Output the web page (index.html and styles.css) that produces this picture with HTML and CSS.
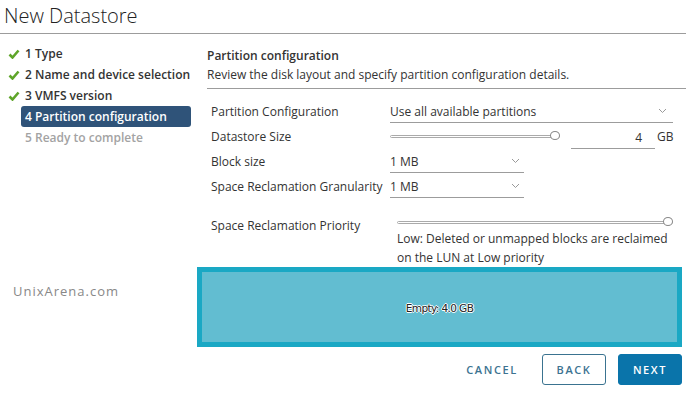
FILE: index.html
```html
<!DOCTYPE html>
<html lang="en">

<head>
    <meta charset="UTF-8">
    <meta name="viewport" content="width=device-width, initial-scale=1.0">
    <title>New Datastore</title>

    <link rel="stylesheet" href="styles.css">
</head>

<body>
    <h1 class="titulo">New Datastore</h1>

    <div class="wizard">
        <!-- pasos del asistente -->
        <ul class="pasos">
            <li class="hecho"><span class="check"></span>1 Type</li>
            <li class="hecho"><span class="check"></span>2 Name and device selection</li>
            <li class="hecho"><span class="check"></span>3 VMFS version</li>
            <li class="activo">4 Partition configuration</li>
            <li class="pendiente">5 Ready to complete</li>
        </ul>

        <div class="contenido">
            <div class="cabecera">
                <h2>Partition configuration</h2>
                <p>Review the disk layout and specify partition configuration details.</p>
            </div>

            <div class="form">
                <div class="fila">
                    <label>Partition Configuration</label>
                    <div class="select ancho">Use all available partitions<span class="flecha"></span></div>
                </div>
                <div class="fila">
                    <label>Datastore Size</label>
                    <div class="tamano">
                        <div class="slider corto"><span class="pomo"></span></div>
                        <div class="numero">4</div>
                        <span class="unidad">GB</span>
                    </div>
                </div>
                <div class="fila">
                    <label>Block size</label>
                    <div class="select">1 MB<span class="flecha"></span></div>
                </div>
                <div class="fila">
                    <label>Space Reclamation Granularity</label>
                    <div class="select">1 MB<span class="flecha"></span></div>
                </div>
                <div class="fila prioridad">
                    <label>Space Reclamation Priority</label>
                    <div class="prio">
                        <div class="slider largo"><span class="pomo"></span></div>
                        <p>Low: Deleted or unmapped blocks are reclaimed<br>on the LUN at Low priority</p>
                    </div>
                </div>
            </div>

            <div class="disco">
                <span>Empty: 4.0 GB</span>
            </div>

            <div class="botones">
                <button class="btn plano">CANCEL</button>
                <button class="btn borde">BACK</button>
                <button class="btn lleno">NEXT</button>
            </div>
        </div>

        <div class="marca">UnixArena.com</div>
    </div>

    <script>
        // chevron y check en svg
        const chevron = '<svg width="9" height="6" viewBox="0 0 9 6"><polyline points="1,1 4.5,4.5 8,1" fill="none" stroke="#9a9a9a" stroke-width="1"/></svg>';
        const check = '<svg width="12" height="10" viewBox="0 0 12 10"><polyline points="1.5,5.5 4.5,8.5 10.5,1.5" fill="none" stroke="#5fa52a" stroke-width="2.6"/></svg>';

        document.querySelectorAll('.flecha').forEach(function (el) { el.innerHTML = chevron; });
        document.querySelectorAll('.check').forEach(function (el) { el.innerHTML = check; });
    </script>
</body>

</html>
```

FILE: styles.css
```css
:root {
    --texto: #333;
    --azul: #0a74aa;
    --ff: "Open Sans", "Noto Sans", sans-serif;
}

body {
    font-family: var(--ff);
    margin: 0;
    color: var(--texto);
    background: #fff;
    width: 686px;
    height: 396px;
    overflow: hidden;
}

.titulo {
    font-size: 20px;
    font-weight: 300;
    margin: 0;
    padding: 2px 0 0 4px;
    height: 31px;
    line-height: 28px;
    border-bottom: 1px solid #9c9c9c;
    color: #222;
}

.wizard {
    display: flex;
    position: relative;
}

/* pasos */
.pasos {
    list-style: none;
    margin: 0;
    padding: 9px 0 0 0;
    width: 197px;
    flex: none;
    font-size: 12px;
    font-weight: 600;
}

.pasos li {
    height: 21px;
    line-height: 21px;
    display: flex;
    align-items: center;
    padding-left: 8px;
}

.check {
    display: inline-flex;
    width: 17px;
}

.activo {
    background: #2f5379;
    color: #fff;
    border-radius: 3px;
    margin: 0 6px 0 21px;
    padding-left: 4px !important;
}

.pendiente {
    color: #a3a3a3;
    padding-left: 25px !important;
}

/* contenido */
.contenido {
    flex: 1;
    padding-top: 12px;
}

.cabecera {
    margin-left: 10px;
    border-bottom: 1px solid #9c9c9c;
    padding-bottom: 4px;
}

.cabecera h2 {
    font-size: 12px;
    font-weight: 600;
    margin: 0;
    line-height: 19px;
}

.cabecera p {
    font-size: 12px;
    margin: 0;
    line-height: 19px;
}

.form {
    margin: 10px 0 0 14px;
    font-size: 12px;
}

.fila {
    display: grid;
    grid-template-columns: 179px 1fr;
    height: 25px;
    align-items: center;
}

.fila label {
    line-height: 25px;
}

.select {
    display: flex;
    justify-content: space-between;
    align-items: center;
    width: 134px;
    height: 23px;
    border-bottom: 1px solid #9c9c9c;
    padding-right: 4px;
    box-sizing: border-box;
}

.select.ancho {
    width: 283px;
    padding-right: 6px;
}

.flecha {
    display: inline-flex;
}

.tamano {
    display: flex;
    align-items: center;
}

.slider {
    position: relative;
    height: 3px;
    border: 1px solid #aaa;
    border-radius: 2px;
    box-sizing: border-box;
}

.slider.corto {
    width: 170px;
}

.slider.largo {
    width: 276px;
}

.pomo {
    position: absolute;
    right: -1px;
    top: -5px;
    width: 10px;
    height: 9px;
    border: 1px solid #888;
    border-radius: 50%;
    background: #fff;
    box-sizing: border-box;
}

.numero {
    width: 84px;
    margin-left: 11px;
    height: 22px;
    line-height: 22px;
    margin-top: 2px;
    border-bottom: 1px solid #9c9c9c;
    text-align: right;
    padding-right: 13px;
    box-sizing: border-box;
}

.unidad {
    margin-left: 2px;
}

.fila.prioridad {
    height: auto;
    align-items: start;
    margin-top: 14px;
}

.prioridad label {
    line-height: 25px;
}

.prio {
    padding-left: 7px;
    padding-top: 8px;
}

.prio p {
    margin: 5px 0 0 0;
    line-height: 19px;
}

/* disco */
.disco {
    margin: 0 4px 0 0;
    height: 80px;
    border: 5px solid #1aa8c4;
    background: #62bdd1;
    box-sizing: border-box;
    display: flex;
    align-items: center;
    justify-content: center;
    font-family: "DejaVu Sans", sans-serif;
    font-size: 10.5px;
    letter-spacing: -0.6px;
    color: #222;
    padding-top: 2px;
    text-shadow: 1px 0 0 #fff, -1px 0 0 #fff, 0 1px 0 #fff, 0 -1px 0 #fff;
}

/* botones */
.botones {
    display: flex;
    justify-content: flex-end;
    gap: 12px;
    margin: 7px 4px 0 0;
}

.btn {
    font-family: var(--ff);
    font-size: 11px;
    font-weight: 600;
    letter-spacing: 1.6px;
    height: 31px;
    border-radius: 3px;
    padding: 0;
    width: 64px;
}

.plano {
    background: none;
    border: none;
    color: #3c7391;
    width: 76px;
    margin-right: 0;
}

.borde {
    background: #fff;
    border: 1px solid #3a7390;
    color: #3c7391;
}

.lleno {
    background: var(--azul);
    border: 1px solid var(--azul);
    color: #fff;
}

.marca {
    position: absolute;
    left: 13px;
    top: 248px;
    font-size: 13px;
    letter-spacing: 1px;
    color: #888;
}
```
